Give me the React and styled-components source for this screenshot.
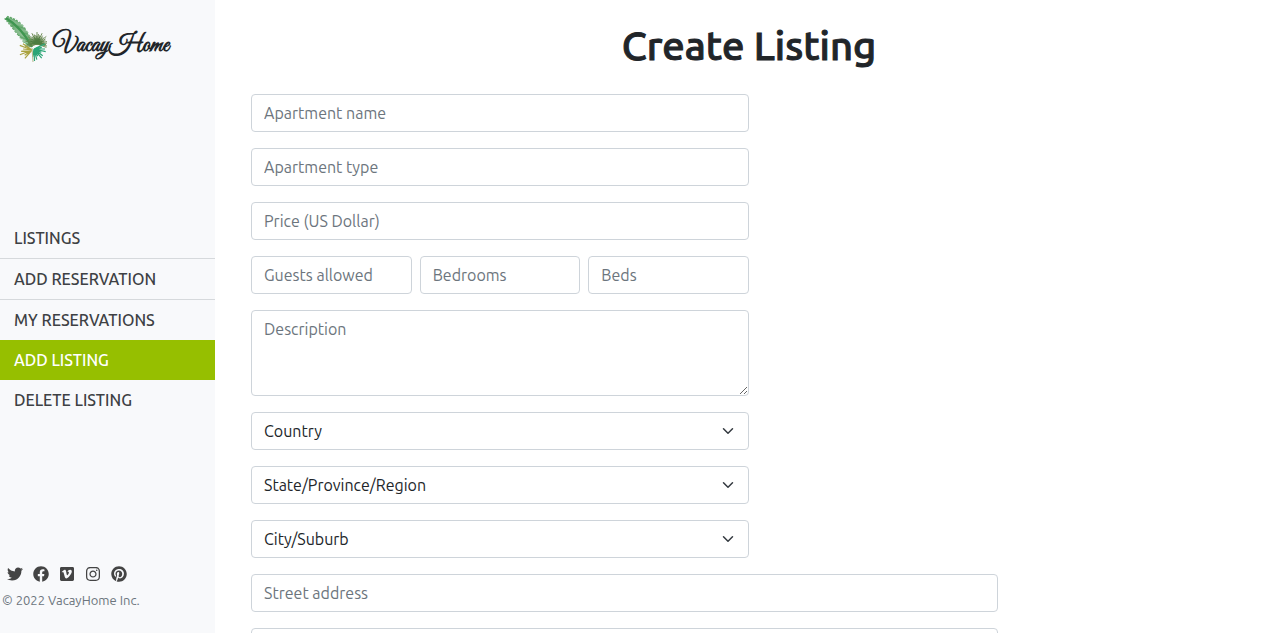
import React from "react";
import styled, { createGlobalStyle } from "styled-components";
import { FaTwitter, FaFacebook, FaVimeo, FaInstagram, FaPinterest } from "react-icons/fa";

const GlobalStyle = createGlobalStyle`
  *, *::before, *::after { box-sizing: border-box; }
  body {
    margin: 0;
    background: #fff;
    color: #212529;
    font-family: Ubuntu, "Noto Sans", sans-serif;
    font-size: 16px;
    line-height: 24px;
  }
`;

const Layout = styled.div`
  display: flex;
  height: 100vh;
`;

const Sidebar = styled.aside`
  display: flex;
  flex-direction: column;
  justify-content: space-between;
  flex: 0 0 215px;
  padding: 14px 0 22px;
  background: #f8f9fb;
`;

const Brand = styled.a`
  display: flex;
  align-items: center;
  gap: 6px;
  padding-left: 4px;
  color: #212529;
  text-decoration: none;
`;

const BrandName = styled.span`
  padding-top: 14px;
  font: 700 24px/24px "Great Vibes", "Liberation Serif", cursive;
`;

const Nav = styled.nav`
  display: flex;
  flex-direction: column;
  padding-top: 8px;
`;

const NavLink = styled.a`
  padding: 8px 14px;
  border-bottom: ${(p) => (p.$divided ? "1px solid #d6d9dc" : "0")};
  background: ${(p) => (p.$active ? "#96bf00" : "transparent")};
  color: ${(p) => (p.$active ? "#fff" : "#3e4144")};
  font-weight: 500;
  text-decoration: none;
  text-transform: uppercase;
`;

const Footer = styled.footer`
  display: flex;
  flex-direction: column;
  gap: 8px;
`;

const Socials = styled.div`
  display: flex;
  gap: 10px;
  padding-left: 7px;
`;

const SocialLink = styled.a`
  display: flex;
  justify-content: center;
  width: 16px;
  color: #444;
  font-size: 16px;
`;

const Copyright = styled.small`
  padding-left: 2px;
  color: #6c757d;
  font-size: 13px;
  line-height: 21px;
`;

const Main = styled.main`
  flex: 1;
  min-width: 0;
  padding: 20px 35px 20px 36px;
  overflow-y: auto;
  scrollbar-width: none;
`;

const Title = styled.h1`
  margin: 0 0 22px;
  font-size: 40px;
  font-weight: 500;
  line-height: 52px;
  text-align: center;
  -webkit-text-stroke: 1px currentColor;
`;

const Form = styled.form`
  display: flex;
  flex-direction: column;
  gap: 16px;
`;

const FieldRow = styled.div`
  display: flex;
  gap: 8px;
  width: ${(p) => (p.$wide ? "75%" : "50%")};
`;

const Input = styled.input`
  flex: 1;
  min-width: 0;
  height: 38px;
  padding: 6px 12px;
  border: 1px solid #ced4da;
  border-radius: 4px;
  background: #fff;
  color: #212529;
  font: inherit;
  &::placeholder { color: #6c757d; opacity: 1; }
`;

const TextArea = styled(Input).attrs({ as: "textarea" })`
  height: 86px;
  resize: vertical;
`;

const SelectBox = styled.div`
  display: grid;
  flex: 1;
  align-items: center;
  & > * { grid-area: 1 / 1; }
  & > svg { justify-self: end; margin-right: 15px; pointer-events: none; }
`;

const Select = styled(Input).attrs({ as: "select" })`
  width: 100%;
  appearance: none;
`;

function rays(cx, cy, from, to, count, lengths) {
  return Array.from({ length: count }, (_, i) => {
    const a = ((from + ((to - from) * i) / (count - 1)) * Math.PI) / 180;
    const r = lengths[i % lengths.length];
    return `M${cx} ${cy}L${(cx + r * Math.cos(a)).toFixed(1)} ${(cy + r * Math.sin(a)).toFixed(1)}`;
  }).join("");
}

function frond() {
  let d = "";
  for (let i = 1; i < 30; i += 1) {
    const t = i / 30;
    const x = 2 * (1 - t) ** 2 + 34 * t * (1 - t) + 28 * t * t;
    const y = 4 * (1 - t) ** 2 + 26 * t * (1 - t) + 33 * t * t;
    const l = (i % 3 ? 1.5 : 0.5) + 5 * Math.sin(Math.PI * (0.05 + t * 0.75));
    d += `M${x - l} ${y + l * 0.1}L${x} ${y}L${x + l * 0.2} ${y - l}`;
  }
  return d;
}

function PalmLogo() {
  return (
    <svg width="43" height="50" viewBox="0 0 43 50" fill="none" aria-hidden="true">
      <path d={frond()} stroke="#4c9b55" strokeWidth="0.9" />
      <path d="M2 4Q17 13 28 33" stroke="#3f9650" strokeWidth="2.4" />
      <path d={rays(33, 30, -200, 20, 27, [9, 12, 10])} stroke="#64854a" strokeWidth="0.9" />
      <path d={rays(33, 29, -190, 20, 18, [7, 5])} stroke="#4d7c40" strokeWidth="1" />
      <path d={rays(30, 35, -25, 100, 11, [12, 8, 11])} stroke="#2ba576" strokeWidth="1.2" />
      <path d={rays(28, 36, 130, 215, 7, [11, 9, 13])} stroke="#aba33f" strokeWidth="1.2" />
      <path d="M28 34L29 48" stroke="#b5b889" strokeWidth="1" />
    </svg>
  );
}

function Chevron() {
  return (
    <svg width="12" height="12" viewBox="0 0 16 16" fill="none" aria-hidden="true">
      <path d="m2 5 6 6 6-6" stroke="#343a40" strokeWidth="2" strokeLinecap="round" strokeLinejoin="round" />
    </svg>
  );
}

function SelectField({ label }) {
  return (
    <FieldRow>
      <SelectBox>
        <Select aria-label={label} defaultValue="">
          <option value="">{label}</option>
        </Select>
        <Chevron />
      </SelectBox>
    </FieldRow>
  );
}

function TextField({ label }) {
  return <Input type="text" aria-label={label} placeholder={label} />;
}

const links = [
  { label: "Listings", divided: true },
  { label: "Add reservation", divided: true },
  { label: "My reservations" },
  { label: "Add listing", active: true },
  { label: "Delete listing" },
];

const socials = [
  ["Twitter", FaTwitter],
  ["Facebook", FaFacebook],
  ["Vimeo", FaVimeo],
  ["Instagram", FaInstagram],
  ["Pinterest", FaPinterest],
];

export default function App() {
  return (
    <>
      <GlobalStyle />
      <Layout>
        <Sidebar>
          <Brand href="#home">
            <PalmLogo />
            <BrandName>VacayHome</BrandName>
          </Brand>
          <Nav>
            {links.map((l) => (
              <NavLink
                key={l.label}
                href="#nav"
                $divided={l.divided}
                $active={l.active}
                aria-current={l.active ? "page" : undefined}
              >
                {l.label}
              </NavLink>
            ))}
          </Nav>
          <Footer>
            <Socials>
              {socials.map(([name, Icon]) => (
                <SocialLink key={name} href="#social" aria-label={name}>
                  <Icon />
                </SocialLink>
              ))}
            </Socials>
            <Copyright>© 2022 VacayHome Inc.</Copyright>
          </Footer>
        </Sidebar>
        <Main>
          <Title>Create Listing</Title>
          <Form>
            <FieldRow><TextField label="Apartment name" /></FieldRow>
            <FieldRow><TextField label="Apartment type" /></FieldRow>
            <FieldRow><TextField label="Price (US Dollar)" /></FieldRow>
            <FieldRow>
              <TextField label="Guests allowed" />
              <TextField label="Bedrooms" />
              <TextField label="Beds" />
            </FieldRow>
            <FieldRow>
              <TextArea aria-label="Description" placeholder="Description" />
            </FieldRow>
            <SelectField label="Country" />
            <SelectField label="State/Province/Region" />
            <SelectField label="City/Suburb" />
            <FieldRow $wide><TextField label="Street address" /></FieldRow>
            <FieldRow $wide><TextField label="Postal code" /></FieldRow>
          </Form>
        </Main>
      </Layout>
    </>
  );
}
